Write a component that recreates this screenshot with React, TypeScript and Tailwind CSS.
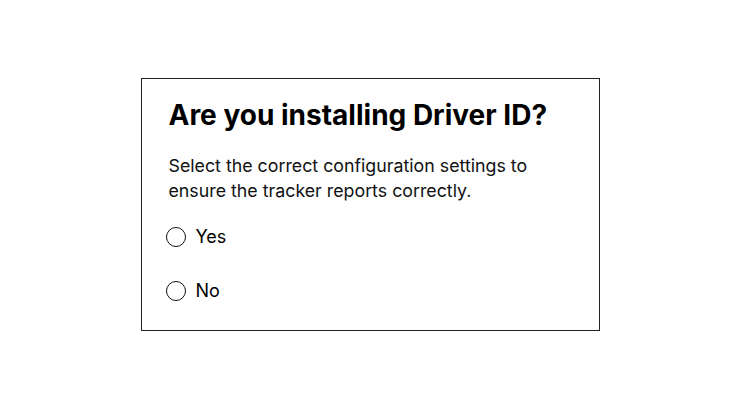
import React from "react";

export default function App() {
  return (
    <div className="w-[740px] h-[409px] flex items-center justify-center bg-white" style={{ fontFamily: "Inter, 'Noto Sans', sans-serif" }}>
      <div className="w-[459px] h-[253px] border border-[#222] px-[27px] pt-[18px] text-black">
        <h1 className="text-[28px] font-bold leading-[36px]">Are you installing Driver ID?</h1>
        <p className="mt-[20px] text-[17.8px] leading-[25px] text-[#111]">
          Select the correct configuration settings to
          <br />
          ensure the tracker reports correctly.
        </p>
        <div className="mt-[22px] flex flex-col gap-[30px] -ml-[3px]">
          {["Yes", "No"].map((l) => (
            <label key={l} className="flex items-center gap-[10px] text-[18px] leading-[24px]">
              <span className="w-[20px] h-[20px] rounded-full border-[1.5px] border-[#111]" />
              <span>{l}</span>
            </label>
          ))}
        </div>
      </div>
    </div>
  );
}
